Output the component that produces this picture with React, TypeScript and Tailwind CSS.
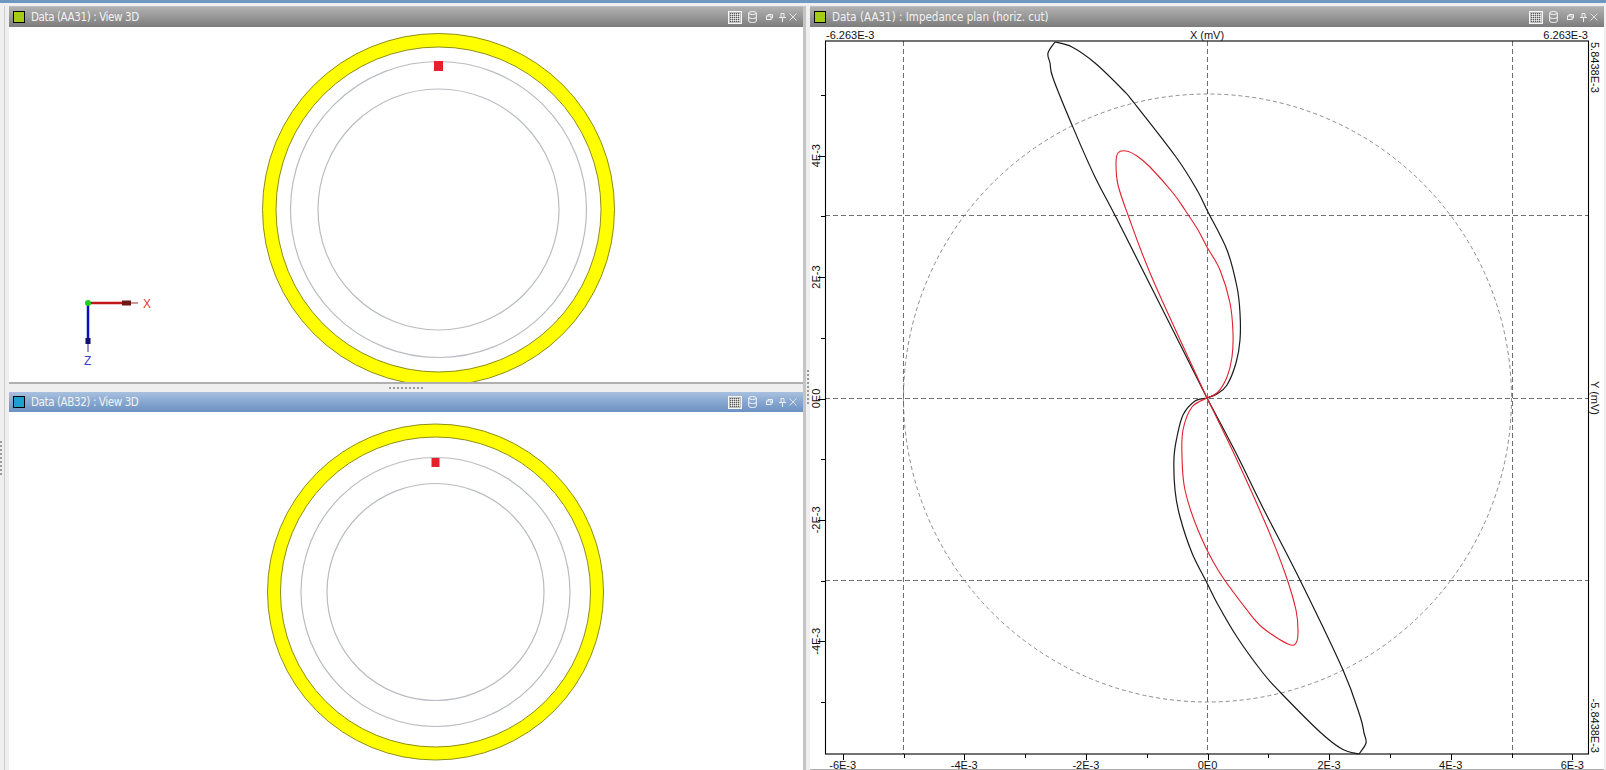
const F = { fontFamily: '"Liberation Sans", Arial, sans-serif' };

function Icons() {
  return (
    <div className="ml-auto flex items-center">
      <svg width="14" height="13" viewBox="0 0 14 13" className="mr-[6px]">
        <rect x="0.5" y="0.5" width="13" height="12" fill="#bcbcbc" stroke="#f6f6f6" />
        <path d="M2 2.5h10M2 4.5h10M2 6.5h10M2 8.5h10M2 10.5h10" stroke="#5a5a5a" strokeDasharray="1 1" />
        <path d="M3 3.5h9M3 5.5h9M3 7.5h9M3 9.5h9" stroke="#f0f0f0" strokeDasharray="1 1" />
      </svg>
      <svg width="9" height="12" viewBox="0 0 9 12" className="mr-[9px]" fill="none" stroke="#f4f4f4">
        <ellipse cx="4.5" cy="2" rx="3.8" ry="1.5" />
        <path d="M0.7 2v8c0 2 7.6 2 7.6 0V2M0.7 6c0 2 7.6 2 7.6 0" />
      </svg>
      <svg width="7" height="6" viewBox="0 0 7 6" className="mr-[6px]" fill="none" stroke="#eeeeee">
        <rect x="0.5" y="2" width="4.5" height="3.5" />
        <path d="M2 2V0.5h4.5v3.5H5" />
      </svg>
      <svg width="7" height="9" viewBox="0 0 7 9" className="mr-[3px]" fill="none" stroke="#eeeeee">
        <path d="M2 0.5h3v4H2zM0 4.5h7M3.5 5v4" />
      </svg>
      <svg width="8" height="8" viewBox="0 0 8 8" fill="none" stroke="#e8e8e8" strokeWidth="0.9">
        <path d="M0.5 0.5l7 7M7.5 0.5l-7 7" />
      </svg>
    </div>
  );
}

function Title({ text, swatch, active, tight }: { text: string; swatch: string; active?: boolean; tight?: boolean }) {
  return (
    <div
      className={`h-[20px] shrink-0 flex items-center pl-[4px] pr-[6px] ${
        active
          ? 'bg-gradient-to-b from-[#a9c1e0] via-[#86a7d0] to-[#6b92c2]'
          : 'bg-gradient-to-b from-[#b0b0b0] via-[#979797] to-[#7c7c7c]'
      }`}
    >
      <div className="w-[12px] h-[12px] border border-black mr-[6px]" style={{ background: swatch }} />
      <span
        className={`text-[11.5px] text-[#f2f2f2] leading-none pt-[2px] ${tight ? 'tracking-[-0.4px]' : ''}`}
        style={{ fontFamily: '"DejaVu Sans Condensed", Tahoma, sans-serif' }}
      >
        {text}
      </span>
      <Icons />
    </div>
  );
}

function Ring({ cx, cy, ro, ri, g1, g2 }: { cx: number; cy: number; ro: number; ri: number; g1: number; g2: number }) {
  return (
    <g>
      <circle cx={cx} cy={cy} r={(ro + ri) / 2} fill="none" stroke="#ffff00" strokeWidth={ro - ri} />
      <circle cx={cx} cy={cy} r={ro} fill="none" stroke="#80800f" strokeWidth="0.9" />
      <circle cx={cx} cy={cy} r={ri} fill="none" stroke="#80800f" strokeWidth="0.9" />
      <circle cx={cx} cy={cy} r={g1} fill="none" stroke="#b9bcc0" strokeWidth="1.2" />
      <circle cx={cx} cy={cy} r={g2} fill="none" stroke="#b9bcc0" strokeWidth="1.2" />
    </g>
  );
}

type P = [number, number];

function spline(pts: P[]): string {
  let d = `M${pts[0][0]} ${pts[0][1]}`;
  for (let i = 0; i < pts.length - 1; i++) {
    const p0 = pts[Math.max(i - 1, 0)];
    const p1 = pts[i];
    const p2 = pts[i + 1];
    const p3 = pts[Math.min(i + 2, pts.length - 1)];
    const c1x = p1[0] + (p2[0] - p0[0]) / 6;
    const c1y = p1[1] + (p2[1] - p0[1]) / 6;
    const c2x = p2[0] - (p3[0] - p1[0]) / 6;
    const c2y = p2[1] - (p3[1] - p1[1]) / 6;
    d += `C${c1x} ${c1y} ${c2x} ${c2y} ${p2[0]} ${p2[1]}`;
  }
  return d;
}

const black1: P[] = [
  [1207, 398], [1217, 394], [1227, 385], [1236, 363], [1240, 340], [1240, 313], [1237, 287], [1227, 250], [1208, 212],
  [1197, 190], [1176, 157], [1135, 104], [1123, 90], [1095, 63], [1072, 47], [1055, 42],
];
const black1b: P[] = [[1055, 42], [1048, 53], [1050, 63], [1053, 78], [1072, 125], [1095, 177], [1122, 229], [1207, 398]];
const black2: P[] = [
  [1207, 398], [1195, 401], [1183, 415], [1177, 437], [1174, 458], [1175, 490], [1180, 517], [1192, 553], [1207, 583],
  [1217, 603], [1237, 637], [1263, 673], [1280, 692], [1320, 732], [1342, 749], [1359, 754],
];
const black2b: P[] = [[1359, 754], [1366, 743], [1364, 733], [1360, 716], [1343, 670], [1300, 580], [1263, 508], [1237, 455], [1207, 398]];
const red1: P[] = [
  [1207, 398], [1218, 392], [1227, 377], [1232, 357], [1233, 333], [1230, 303], [1220, 270], [1207, 247], [1198, 230],
  [1185, 210], [1173, 193], [1150, 167], [1137, 156], [1126, 151], [1118, 153], [1116, 164], [1118, 185], [1128, 215],
  [1153, 280], [1207, 398],
];
const red2: P[] = [
  [1207, 398], [1192, 407], [1183, 430], [1182, 457], [1185, 490], [1198, 530], [1218, 570], [1247, 610], [1263, 628],
  [1288, 644], [1296, 643], [1298, 632], [1296, 610], [1285, 573], [1267, 527], [1237, 460], [1207, 398],
];

function Plot() {
  const xt = [-6, -5, -4, -3, -2, -1, 0, 1, 2, 3, 4, 5, 6];
  const yt = [-5, -4, -3, -2, -1, 0, 1, 2, 3, 4, 5];
  const X = (v: number) => 1207.5 + v * 60.8;
  const Y = (v: number) => 398.5 - v * 60.7;
  const lab = (v: number) => (v === 0 ? '0E0' : `${v}E-3`);
  return (
    <svg viewBox="810 27 794 742" className="w-full flex-1 min-h-0 block" style={F} fontSize="11" fill="#111">
      <circle cx="1207.5" cy="398" r="304" fill="none" stroke="#8c8c8c" strokeDasharray="4 3" />
      <g stroke="#707070" strokeDasharray="5 3" fill="none">
        <path d="M903.5 41V754M1207.5 41V754M1512.5 41V754M825 215.5H1589M825 398.5H1589M825 580.5H1589" />
      </g>
      <rect x="825.5" y="41" width="763" height="713" fill="none" stroke="#000" strokeWidth="1.1" />
      <g stroke="#000" fill="none">
        {xt.map((v) => (
          <path key={v} d={`M${Math.round(X(v)) + 0.5} 754V${v % 2 === 0 ? 760 : 758}`} />
        ))}
        {yt.map((v) => (
          <path key={v} d={`M825 ${Math.round(Y(v)) + 0.5}H${v % 2 === 0 ? 818 : 821}`} />
        ))}
      </g>
      {[-6, -4, -2, 0, 2, 4, 6].map((v) => (
        <text key={v} x={X(v)} y="768.5" textAnchor="middle">
          {lab(v)}
        </text>
      ))}
      {[-4, -2, 0, 2, 4].map((v) => (
        <text key={v} textAnchor="middle" transform={`translate(820 ${Y(v)}) rotate(-90)`}>
          {lab(v)}
        </text>
      ))}
      <text x="826" y="39">-6.263E-3</text>
      <text x="1207" y="39" textAnchor="middle">X (mV)</text>
      <text x="1588" y="39" textAnchor="end">6.263E-3</text>
      <text transform="translate(1591 42) rotate(90)">5.8438E-3</text>
      <text transform="translate(1591 398) rotate(90)" textAnchor="middle">Y (mV)</text>
      <text transform="translate(1591 753) rotate(90)" textAnchor="end">-5.8438E-3</text>
      <g fill="none" stroke="#1a1a1a" strokeWidth="1.2">
        <path d={spline(black1)} />
        <path d={spline(black1b)} />
        <path d={spline(black2)} />
        <path d={spline(black2b)} />
      </g>
      <g fill="none" stroke="#e0202c" strokeWidth="1.1">
        <path d={spline(red1)} />
        <path d={spline(red2)} />
      </g>
    </svg>
  );
}

function Axes() {
  return (
    <g style={F} fontSize="12">
      <path d="M88 303H124" stroke="#c01818" strokeWidth="2.5" />
      <path d="M122 300.5h9v5h-9z" fill="#701818" />
      <path d="M131 303H138" stroke="#a03030" strokeWidth="1" />
      <path d="M88 303V339" stroke="#0a10c0" strokeWidth="2.5" />
      <path d="M85.5 338h5v6h-5z" fill="#10106a" />
      <path d="M88 344V352" stroke="#303090" strokeWidth="1" />
      <circle cx="88" cy="303" r="3" fill="#22cc22" />
      <text x="143" y="307.5" fill="#e23b3b">X</text>
      <text x="84" y="365" fill="#3a3ad0">Z</text>
    </g>
  );
}

function Dots({ vertical }: { vertical?: boolean }) {
  return (
    <div
      className={
        vertical
          ? 'w-[2px] h-[34px] border-l-2 border-dotted border-[#9a9a9a]'
          : 'w-[34px] h-[2px] border-t-2 border-dotted border-[#9a9a9a]'
      }
    />
  );
}

export default function App() {
  return (
    <div className="w-[1606px] h-[770px] overflow-hidden bg-[#efefef] flex flex-col">
      <div className="h-[3px] shrink-0 bg-[#6f98c0]" />
      <div className="flex-1 min-h-0 flex pt-[3px]">
        <div className="w-[9px] shrink-0 flex">
          <div className="w-[4px] pt-[435px]">
            <Dots vertical />
          </div>
          <div className="w-[1px] bg-[#cccccc]" />
        </div>
        <div className="w-[797px] shrink-0 flex flex-col border-r-[3px] border-[#c4c4c4]">
          <section className="h-[378px] shrink-0 flex flex-col bg-white border-t border-[#bdbdbd] border-b-2 border-b-[#b0b0b0]">
            <Title text="Data (AA31) : View 3D" swatch="#a4cc14" tight />
            <svg viewBox="9 27 794 355" className="w-full flex-1 min-h-0 block">
              <Ring cx={438.5} cy={209.5} ro={176} ri={162.5} g1={148} g2={120.5} />
              <rect x="434" y="61" width="9" height="10" fill="#e8202a" />
              <Axes />
            </svg>
          </section>
          <div className="h-[8px] shrink-0 flex items-center justify-center">
            <Dots />
          </div>
          <section className="flex-1 min-h-0 flex flex-col bg-white">
            <Title text="Data (AB32) : View 3D" swatch="#1f9fd0" active tight />
            <svg viewBox="9 412 794 358" className="w-full flex-1 min-h-0 block">
              <Ring cx={435.5} cy={592} ro={168} ri={155} g1={134.5} g2={108.5} />
              <rect x="431.5" y="458" width="8" height="9" fill="#e8202a" />
            </svg>
          </section>
        </div>
        <div className="w-[4px] shrink-0 flex justify-center pt-[364px]">
          <Dots vertical />
        </div>
        <section className="w-[794px] shrink-0 flex flex-col bg-white border-t border-[#bdbdbd] border-b border-b-[#b0b0b0]">
          <Title text="Data (AA31) : Impedance plan (horiz. cut)" swatch="#a4cc14" />
          <Plot />
        </section>
      </div>
    </div>
  );
}
